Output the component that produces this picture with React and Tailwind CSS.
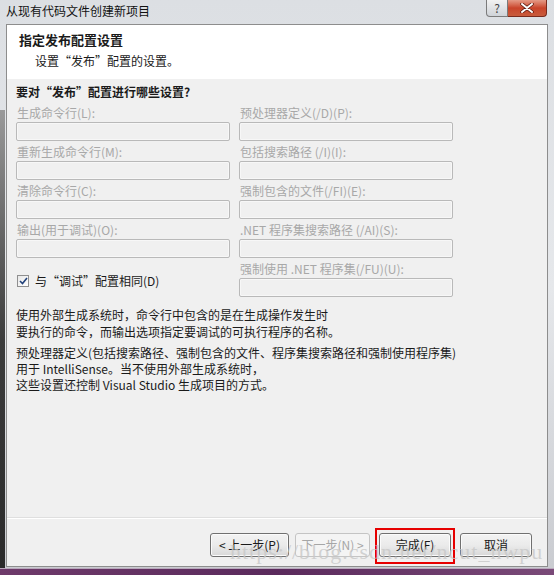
import React from "react";

const cjk = { fontFamily: '"Noto Sans CJK SC", "Noto Sans", sans-serif' };

const leftFields = [
  "生成命令行(L):",
  "重新生成命令行(M):",
  "清除命令行(C):",
  "输出(用于调试)(O):",
];

const rightFields = [
  "预处理器定义(/D)(P):",
  "包括搜索路径 (/I)(I):",
  "强制包含的文件(/FI)(E):",
  ".NET 程序集搜索路径 (/AI)(S):",
  "强制使用 .NET 程序集(/FU)(U):",
];

// disabled text field with its caption
const Field = ({ label }) => (
  <div className="flex flex-col">
    <div className="h-[20px] text-[12px] leading-[20px] text-[#a8a8a8] pl-[1px] pt-[1px]">{label}</div>
    <div className="h-[19px] w-[214px] border border-[#b9b9b9] rounded-[2px] bg-[#f0f0f0] shadow-[inset_0_0_0_1px_#f7f7f7]" />
  </div>
);

const Button = ({ children, disabled, className = "" }) => (
  <div
    className={
      "h-[24px] flex items-center justify-center rounded-[3px] border text-[12px] " +
      (disabled
        ? "border-[#c4c4c4] bg-[#f4f4f4] text-[#a6a6a6] "
        : "border-[#707070] bg-gradient-to-b from-[#f3f3f3] via-[#ebebeb] to-[#d8d8d8] text-[#1a1a1a] shadow-[inset_0_0_0_1px_#fbfbfb] ") +
      className
    }
  >
    {children}
  </div>
);

export default function App() {
  return (
    <div
      className="relative w-[554px] h-[575px] overflow-hidden bg-gradient-to-b from-[#dcdfe3] via-[#e6e8eb] to-[#c9cbd0] flex flex-col"
      style={cjk}
    >
      {/* dark glass on the left edge */}
      <div className="absolute left-0 top-[110px] w-[5px] h-[460px] bg-gradient-to-b from-[#9a9a9a] via-[#3c3c3c] to-[#2a2a2a]" />

      {/* title bar */}
      <div className="h-[24px] flex items-start shrink-0 relative">
        <div className="pl-[6px] pt-[3px] text-[12px] leading-[16px] text-[#111]">从现有代码文件创建新项目</div>
        <div className="ml-auto mr-[7px] flex">
          <div className="w-[22px] h-[17px] rounded-bl-[4px] border border-[#7b7b7b] border-t-0 bg-gradient-to-b from-[#f2f2f2] to-[#cfd3d8] flex items-center justify-center text-[12px] leading-none text-[#444]">
            ?
          </div>
          <div className="w-[39px] h-[17px] rounded-br-[4px] border border-[#7a2a1c] border-t-0 border-l-0 bg-gradient-to-b from-[#e49a86] via-[#c9442a] to-[#c85b3c] flex items-center justify-center">
            <svg width="14" height="10" viewBox="0 0 14 10">
              <path d="M2 1 L12 9 M12 1 L2 9" stroke="#5a1a10" strokeWidth="3.5" strokeLinecap="round" />
              <path d="M2 1 L12 9 M12 1 L2 9" stroke="#ffffff" strokeWidth="2" strokeLinecap="round" />
            </svg>
          </div>
        </div>
      </div>

      {/* client area */}
      <div className="ml-[6px] w-[542px] h-[543px] border border-[#8d8d8d] bg-[#f0f0f0] flex flex-col text-[#1a1a1a] relative">
        {/* header */}
        <div className="h-[54px] bg-white shrink-0 pl-[12px] pt-[6px]">
          <div className="text-[13px] leading-[18px] font-bold">指定发布配置设置</div>
          <div className="text-[12px] leading-[18px] pl-[16px] pt-[3px]">设置“发布”配置的设置。</div>
        </div>

        {/* body */}
        <div className="px-[9px] pt-[4px] flex-1">
          <div className="text-[12px] leading-[18px] font-bold">要对“发布”配置进行哪些设置?</div>

          <div className="flex gap-[9px] mt-[1px]">
            <div className="flex flex-col">
              {leftFields.map((f) => (
                <Field key={f} label={f} />
              ))}
              <div className="flex items-center gap-[6px] mt-[15px] pl-[1px]">
                <div className="w-[12px] h-[12px] border border-[#8f8f8f] bg-gradient-to-br from-[#e8e8e8] to-[#ffffff] flex items-center justify-center">
                  <svg width="9" height="8" viewBox="0 0 9 8">
                    <path d="M1 4 L3.5 6.5 L8 1" stroke="#21417a" strokeWidth="1.6" fill="none" />
                  </svg>
                </div>
                <span className="text-[12px] leading-[16px]">与“调试”配置相同(D)</span>
              </div>
            </div>
            <div className="flex flex-col">
              {rightFields.map((f) => (
                <Field key={f} label={f} />
              ))}
            </div>
          </div>

          <div className="mt-[9px] text-[12px] leading-[17px]">
            <div>使用外部生成系统时，命令行中包含的是在生成操作发生时</div>
            <div>要执行的命令，而输出选项指定要调试的可执行程序的名称。</div>
          </div>
          <div className="mt-[5px] text-[12px] leading-[16px]">
            <div>预处理器定义(包括搜索路径、强制包含的文件、程序集搜索路径和强制使用程序集)</div>
            <div>用于 IntelliSense。当不使用外部生成系统时，</div>
            <div>这些设置还控制 Visual Studio 生成项目的方式。</div>
          </div>
        </div>

        {/* footer */}
        <div className="h-[49px] shrink-0 border-t border-[#dfdfdf] shadow-[inset_0_1px_0_#ffffff] flex items-start justify-end pr-[15px] pt-[15px]">
          <Button className="w-[79px]">&lt; 上一步(P)</Button>
          <Button disabled className="w-[75px] ml-[6px]">下一步(N) &gt;</Button>
          <div className="relative ml-[9px]">
            <Button className="w-[72px]">完成(F)</Button>
            <div className="absolute -left-[4px] -top-[5px] w-[80px] h-[36px] border-[2px] border-[#e60000]" />
          </div>
          <Button className="w-[72px] ml-[9px]">取消</Button>
        </div>

        <div
          className="absolute left-[223px] top-[516px] text-[22px] leading-none text-[#c8c8c8]/80 tracking-[1px] pointer-events-none"
          style={{ fontFamily: '"Liberation Serif", serif' }}
        >
          https://blog.csdn.net/ncut_nwpu
        </div>
      </div>

      {/* bottom glass edge */}
      <div className="absolute left-0 bottom-0 w-full h-[7px] bg-gradient-to-r from-[#6e3a6a] via-[#5a2a5c] to-[#7a4a78] border-t border-[#b9a8bb]" />
    </div>
  );
}
